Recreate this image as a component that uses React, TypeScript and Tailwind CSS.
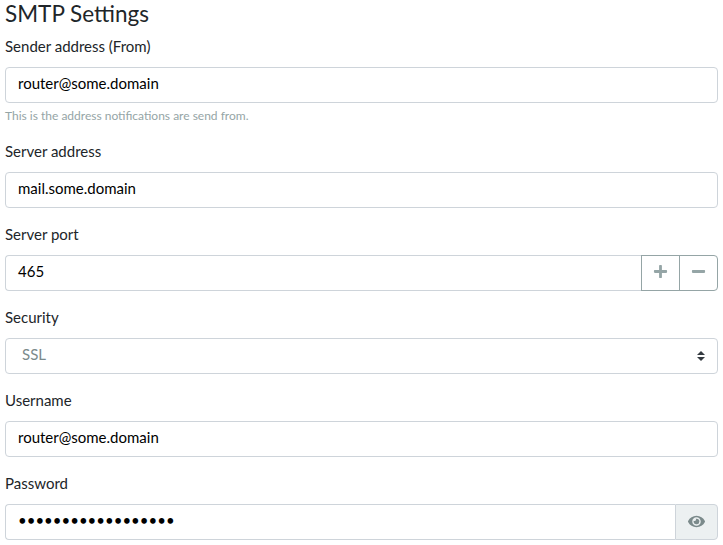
import React from 'react';
import { FaPlus, FaMinus, FaEye } from 'react-icons/fa';

const box = 'h-9 w-full rounded border border-[#ced4da] bg-white pl-3 pb-[3px] flex items-center text-black';

function Label({ children }: { children: React.ReactNode }) {
  return <div className="mb-[11px] h-[20px] leading-[20px]">{children}</div>;
}

export default function App() {
  return (
    <div className="h-[545px] w-[723px] overflow-hidden bg-white px-[5px] font-['Lato',sans-serif] text-[15px] text-[#212529]">
      <h1 className="h-[36px] text-[22.5px] leading-[27px]">SMTP Settings</h1>
      <div className="h-[105px]">
        <Label>Sender address (From)</Label>
        <div className={box}>router@some.domain</div>
        <div className="mt-1 text-[12px] leading-[18px] text-[#95a5a6]">This is the address notifications are send from.</div>
      </div>
      <div className="h-[83px]">
        <Label>Server address</Label>
        <div className={box}>mail.some.domain</div>
      </div>
      <div className="h-[83px]">
        <Label>Server port</Label>
        <div className="flex h-9">
          <div className="flex flex-1 items-center rounded-l border border-r-0 border-[#ced4da] pb-[3px] pl-3 text-black">465</div>
          <div className="flex w-[39px] items-center justify-center border border-[#95a5a6] pb-[3px] text-[#95a5a6]"><FaPlus size={15} /></div>
          <div className="-ml-px flex w-[39px] items-center justify-center rounded-r border border-[#95a5a6] pb-[3px] text-[#95a5a6]"><FaMinus size={15} /></div>
        </div>
      </div>
      <div className="h-[83px]">
        <Label>Security</Label>
        <div className="flex h-9 items-center justify-between rounded border border-[#ced4da] pb-[3px] pl-4 pr-3 text-[#7b8a8b]">
          <span>SSL</span>
          <svg className="mt-[3px]" width="8" height="10" viewBox="0 0 4 5"><path fill="#343a40" d="M2 0L0 2h4zm0 5L0 3h4z" /></svg>
        </div>
      </div>
      <div className="h-[83px]">
        <Label>Username</Label>
        <div className={box}>router@some.domain</div>
      </div>
      <div>
        <Label>Password</Label>
        <div className="flex h-9">
          <input type="password" readOnly value="123456789012345678" className="min-w-0 flex-1 rounded-l border border-r-0 border-[#ced4da] pb-[3px] pl-3 text-black outline-none" />
          <div className="flex w-[43px] items-center justify-center rounded-r border border-[#ced4da] bg-[#ecf0f1] pb-px text-[#7b8a8b]"><FaEye size={17} /></div>
        </div>
      </div>
    </div>
  );
}
